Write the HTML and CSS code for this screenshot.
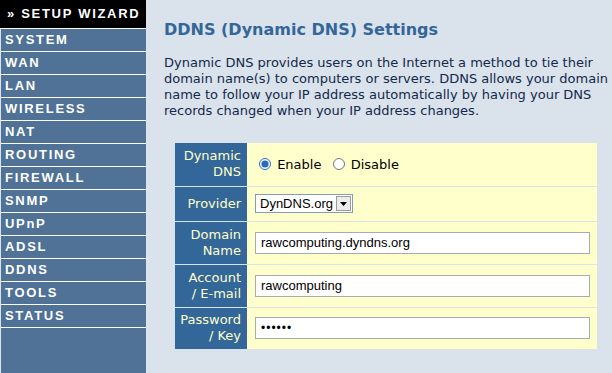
FILE: index.html
```html
<!DOCTYPE html>
<html lang="en">
<head>
    <meta charset="UTF-8">
    <title>DDNS Settings</title>
    <link rel="stylesheet" href="styles.css">
</head>
<body>
<div class="menu">
    <div class="wizard">&raquo; SETUP WIZARD</div>
    <a class="item">SYSTEM</a>
    <a class="item">WAN</a>
    <a class="item">LAN</a>
    <a class="item">WIRELESS</a>
    <a class="item">NAT</a>
    <a class="item">ROUTING</a>
    <a class="item">FIREWALL</a>
    <a class="item">SNMP</a>
    <a class="item">UPnP</a>
    <a class="item">ADSL</a>
    <a class="item">DDNS</a>
    <a class="item">TOOLS</a>
    <a class="item">STATUS</a>
    <div class="rest"></div>
</div>
<div class="content">
    <h1>DDNS (Dynamic DNS) Settings</h1>
    <p class="intro">Dynamic DNS provides users on the Internet a method to tie their domain name(s) to computers or servers. DDNS allows your domain name to follow your IP address automatically by having your DNS records changed when your IP address changes.</p>
    <table class="settings">
        <tr class="tall">
            <th>Dynamic<br>DNS</th>
            <td>
                <label class="radio"><input type="radio" name="ddns" checked> Enable</label>
                <label class="radio"><input type="radio" name="ddns"> Disable</label>
            </td>
        </tr>
        <tr>
            <th>Provider</th>
            <td>
                <span class="select">
                    <span class="select-val">DynDNS.org</span>
                    <span class="select-btn"><svg width="7" height="4" viewBox="0 0 7 4"><path d="M0 0h7L3.5 4z" fill="#000"/></svg></span>
                </span>
            </td>
        </tr>
        <tr class="tall">
            <th>Domain<br>Name</th>
            <td><input class="field" type="text" value="rawcomputing.dyndns.org"></td>
        </tr>
        <tr class="tall">
            <th>Account<br>/ E-mail</th>
            <td><input class="field" type="text" value="rawcomputing"></td>
        </tr>
        <tr class="tall last">
            <th>Password<br>/ Key</th>
            <td><input class="field pass" type="password" value="secret"></td>
        </tr>
    </table>
</div>
</body>
</html>
```

FILE: styles.css
```css
*{
    margin: 0;
    padding: 0;
    box-sizing: border-box;
}
html, body{
    height: 100%;
}
body{
    display: flex;
    background-color: #dae2eb;
    font-family: "DejaVu Sans", Verdana, sans-serif;
    overflow: hidden;
}
.menu{
    width: 146px;
    display: flex;
    flex-direction: column;
    flex-shrink: 0;
}
.wizard{
    height: 29px;
    background-color: #000;
    border-bottom: 1px solid #fff;
    color: #fff;
    font-family: "Liberation Sans", Arial, sans-serif;
    font-weight: bold;
    font-size: 13px;
    letter-spacing: 1.7px;
    line-height: 28px;
    padding-left: 7px;
}
.item{
    display: block;
    height: 23px;
    margin-left: 1px;
    background-color: #4f7296;
    border-bottom: 1px solid #fff;
    color: #fff;
    font-family: "Liberation Sans", Arial, sans-serif;
    font-weight: bold;
    font-size: 13px;
    letter-spacing: 1.7px;
    line-height: 22px;
    padding-left: 4px;
}
.rest{
    flex: 1;
    margin-left: 1px;
    background-color: #4f7296;
}
.content{
    padding: 20px 0 0 18px;
}
h1{
    font-size: 16px;
    color: #336699;
    font-weight: bold;
    line-height: 19px;
}
.intro{
    width: 446px;
    margin-top: 16px;
    font-size: 13px;
    line-height: 16px;
    color: #13294b;
}
.settings{
    margin: 24px 0 0 11px;
    width: 422px;
    border-collapse: collapse;
    font-size: 13px;
}
.settings th{
    width: 72px;
    background-color: #336699;
    color: #ffffcc;
    font-weight: normal;
    text-align: right;
    line-height: 16px;
    padding: 0 6px 0 0;
    height: 35px;
    border-bottom: 1px solid #dae2eb;
}
.settings td{
    background-color: #ffffcc;
    padding: 0 7px 0 8px;
    height: 35px;
    border-bottom: 1px solid #dae2eb;
}
.settings tr.tall th, .settings tr.tall td{
    height: 43px;
}
.settings tr.last th, .settings tr.last td{
    height: 42px;
    border-bottom: none;
}
.radio{
    color: #000;
    margin-right: 3px;
}
.radio input{
    width: 12px;
    height: 12px;
    margin: 0 2px 0 4px;
    vertical-align: -1px;
    accent-color: #2a6ab8;
}
.select{
    display: inline-flex;
    align-items: center;
    height: 19px;
    border: 1px solid #7f9db9;
    background-color: #fff;
    font-family: "Liberation Sans", Arial, sans-serif;
    font-size: 13px;
    vertical-align: middle;
}
.select-val{
    padding: 0 3px 0 4px;
}
.select-btn{
    display: flex;
    align-items: center;
    justify-content: center;
    width: 15px;
    height: 15px;
    margin-right: 1px;
    background-color: #ececec;
    border: 1px solid #9a9a9a;
}
.field{
    display: block;
    width: 335px;
    height: 22px;
    border: 1px solid #a5acb2;
    padding: 0 5px;
    font-family: "Liberation Sans", Arial, sans-serif;
    font-size: 13px;
    color: #000;
    background-color: #fff;
    outline: none;
}
.pass{
    letter-spacing: 1px;
    font-size: 12px;
}
```
